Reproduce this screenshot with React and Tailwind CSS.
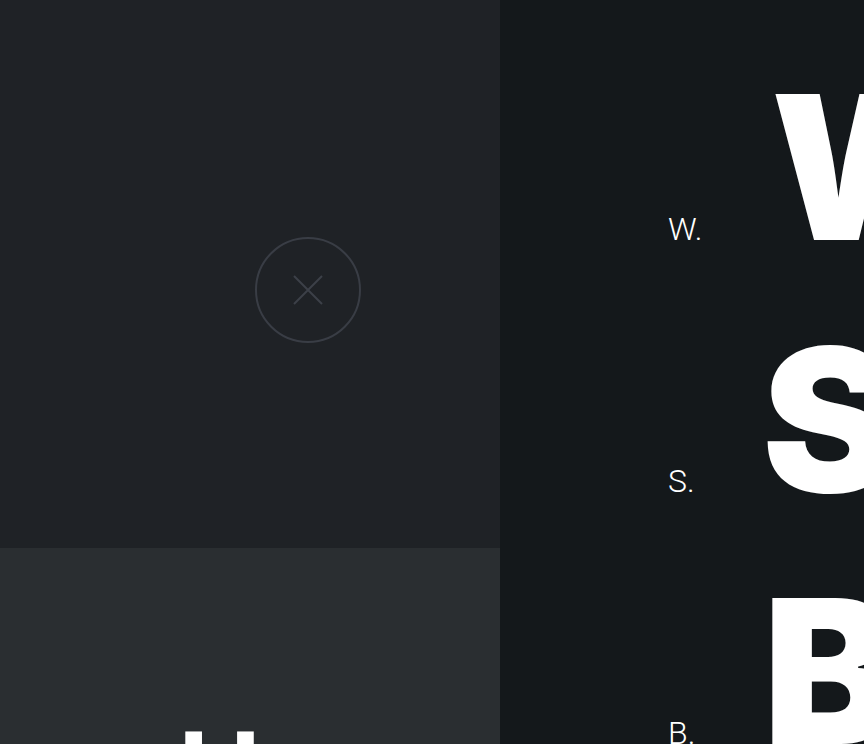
export default function App() {
  const rows = [
    { label: "W.", big: "W", ml: "ml-[13px]" },
    { label: "S.", big: "S", ml: "ml-[4px]" },
    { label: "B.", big: "B", ml: "ml-[5px]" },
  ];
  return (
    <div className="w-[864px] h-[744px] overflow-hidden flex font-['Roboto',sans-serif]">
      <div className="w-[500px] shrink-0 flex flex-col">
        <div className="h-[548px] shrink-0 bg-[#1f2226] pl-[255px] pt-[237px]">
          <div className="w-[106px] h-[106px] rounded-full border-2 border-[#393d45] flex items-center justify-center">
            <svg width="30" height="30" viewBox="0 0 30 30" fill="none" stroke="#3c4048" strokeWidth="2">
              <path d="M1 1 L29 29 M29 1 L1 29" />
            </svg>
          </div>
        </div>
        <div className="flex-1 bg-[#2a2e31] pl-[177px] pt-[166px] overflow-hidden">
          <div className="text-white font-black text-[110px] leading-none font-['Lato',sans-serif]">H</div>
        </div>
      </div>
      <div className="flex-1 bg-[#14181b] pl-[168px] pt-[41px] overflow-hidden">
        {rows.map((r) => (
          <div key={r.label} className="flex items-baseline h-[252px] leading-[252px] whitespace-nowrap">
            <span className="w-[90px] shrink-0 text-white font-light text-[32px]">{r.label}</span>
            <span className={`text-white font-black text-[200px] font-['Inter',sans-serif] ${r.ml}`}>{r.big}</span>
          </div>
        ))}
      </div>
    </div>
  );
}
